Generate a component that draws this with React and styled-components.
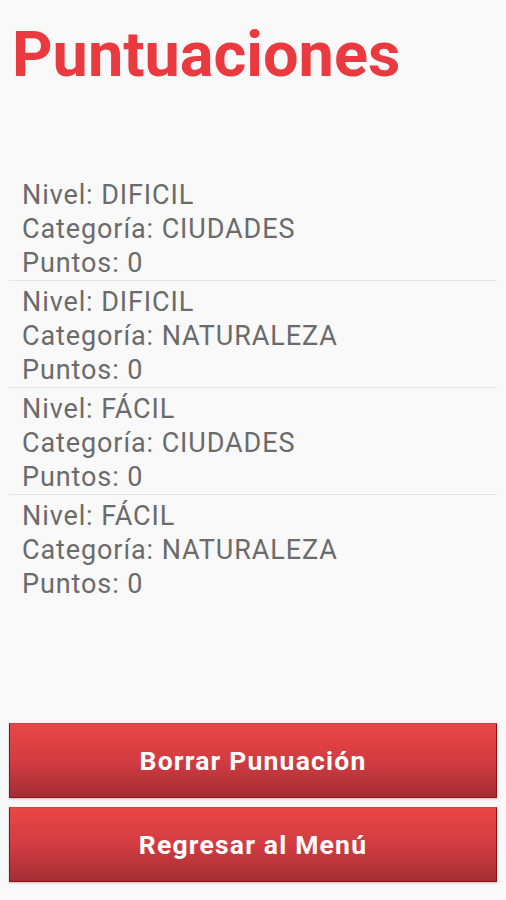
import React from 'react'
import styled, { createGlobalStyle } from 'styled-components'

const GlobalStyle = createGlobalStyle`
  html, body {
    margin: 0;
    padding: 0;
    background: #f9f9f9;
  }
  body {
    font-family: Roboto, "Liberation Sans", sans-serif;
  }
`

const scores = [
  { level: 'DIFICIL', category: 'CIUDADES', points: 0 },
  { level: 'DIFICIL', category: 'NATURALEZA', points: 0 },
  { level: 'FÁCIL', category: 'CIUDADES', points: 0 },
  { level: 'FÁCIL', category: 'NATURALEZA', points: 0 },
]

const App = () => (
  <>
    <GlobalStyle />
    <Screen>
      <Title>Puntuaciones</Title>
      <ScoreList>
        {scores.map((s, i) => (
          <ScoreItem key={i}>
            <Line>Nivel: {s.level}</Line>
            <Line>Categoría: {s.category}</Line>
            <Line>Puntos: {s.points}</Line>
          </ScoreItem>
        ))}
      </ScoreList>
      <Actions>
        <ActionButton>Borrar Punuación</ActionButton>
        <ActionButton>Regresar al Menú</ActionButton>
      </Actions>
    </Screen>
  </>
)

export default App

const Screen = styled.div`
  display: flex;
  flex-direction: column;
  height: 900px;
  background: #f9f9f9;
  overflow: hidden;
`

const Title = styled.h1`
  margin: 23px 0 0 12px;
  font-family: Roboto, "Liberation Sans", sans-serif;
  font-weight: 700;
  font-size: 63px;
  line-height: 63px;
  color: #eb3a3f;
  letter-spacing: 0;
`

const ScoreList = styled.ul`
  list-style: none;
  margin: 88px 9px 0 9px;
  padding: 0;
  flex: 1;
`

const ScoreItem = styled.li`
  padding: 4px 0 0 13px;
  border-top: 1px solid #e4e4e4;
  &:first-child {
    border-top: none;
  }
`

const Line = styled.div`
  font-size: 27px;
  line-height: 34px;
  letter-spacing: 0.9px;
  color: #6b6b6b;
  white-space: nowrap;
`

const Actions = styled.div`
  display: flex;
  flex-direction: column;
  gap: 9px;
  margin: 0 9px 18px 9px;
`

const ActionButton = styled.button`
  height: 75px;
  width: 100%;
  border: 1px solid #8e1414;
  border-top-color: #c44a4a;
  background: linear-gradient(to bottom, #ea4646 0%, #d23c41 50%, #a42d34 100%);
  box-shadow: 0 1px 2px rgba(0, 0, 0, 0.25);
  color: #fff;
  font-family: Roboto, "Liberation Sans", sans-serif;
  font-weight: 700;
  font-size: 26.5px;
  letter-spacing: 1.2px;
  padding: 0;
  cursor: pointer;
`
